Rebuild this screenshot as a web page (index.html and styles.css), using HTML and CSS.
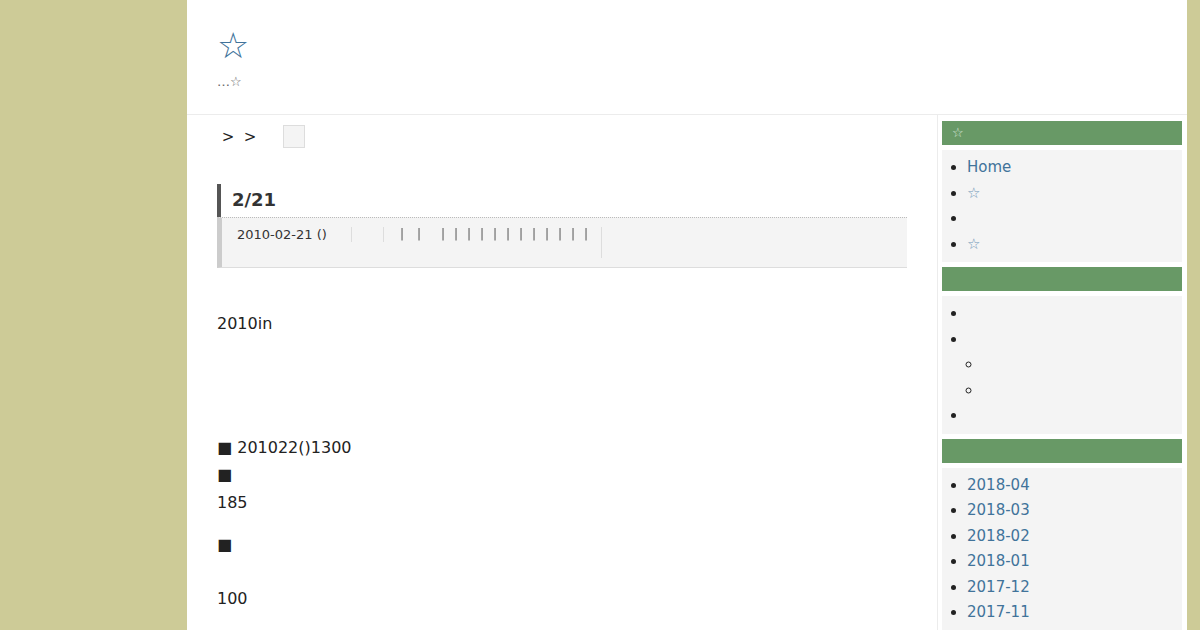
FILE: index.html
```html
<!DOCTYPE html>
<html lang="ja">
<head>
    <meta charset="UTF-8">
    <meta name="viewport" content="width=device-width, initial-scale=1.0">
    <title>2/21</title>
    <link rel="stylesheet" href="styles.css">
</head>
<body>
    <div class="wrapper">
        <!-- site header -->
        <div class="site-header">
            <div class="site-title"><a href="#">☆</a></div>
            <div class="site-desc">…☆</div>
        </div>

        <div class="columns">
            <!-- main column -->
            <div class="main">
                <div class="breadcrumb">
                    <span class="crumbs">&nbsp;&gt;&nbsp;&nbsp;&gt;&nbsp;</span>
                    <span class="crumb-box"></span>
                </div>

                <h2 class="entry-title">2/21</h2>
                <div class="entry-meta">
                    <span class="meta-date">2010-02-21 ()</span>
                    <span class="meta-sep"></span>
                    <span class="meta-sep meta-sep-b"></span>
                    <span class="meta-bars meta-bars-a"><span>|</span><span>|</span></span>
                    <span class="meta-bars meta-bars-b">
                        <span>|</span><span>|</span><span>|</span><span>|</span><span>|</span><span>|</span>
                        <span>|</span><span>|</span><span>|</span><span>|</span><span>|</span><span>|</span>
                    </span>
                    <span class="meta-end"></span>
                </div>

                <div class="entry-body">
                    <p class="para-1">2010in</p>
                    <p class="para-2">■ 201022()1300<br>■<br>185</p>
                    <p class="para-3">■</p>
                    <p class="para-4">100</p>
                </div>
            </div>

            <!-- sidebar -->
            <div class="sidebar">
                <div class="widget">
                    <div class="widget-title">☆</div>
                    <ul class="widget-body">
                        <li><a href="#">Home</a></li>
                        <li><a href="#" class="small-star">☆</a></li>
                        <li>&nbsp;</li>
                        <li><a href="#" class="small-star">☆</a></li>
                    </ul>
                </div>
                <div class="widget">
                    <div class="widget-title"></div>
                    <ul class="widget-body">
                        <li>&nbsp;</li>
                        <li>&nbsp;
                            <ul class="sub-list">
                                <li>&nbsp;</li>
                                <li>&nbsp;</li>
                            </ul>
                        </li>
                        <li>&nbsp;</li>
                    </ul>
                </div>
                <div class="widget">
                    <div class="widget-title"></div>
                    <ul class="widget-body">
                        <li><a href="#">2018-04</a></li>
                        <li><a href="#">2018-03</a></li>
                        <li><a href="#">2018-02</a></li>
                        <li><a href="#">2018-01</a></li>
                        <li><a href="#">2017-12</a></li>
                        <li><a href="#">2017-11</a></li>
                    </ul>
                </div>
            </div>
        </div>
    </div>
</body>
</html>
```

FILE: styles.css
```css
body {
    margin: 0;
    padding: 0;
    background-color: #cdcb97;
    color: #222;
    font-family: "DejaVu Sans", Verdana, sans-serif;
    font-size: 16px;
}
a {
    color: #41739a;
    text-decoration: none;
}
.wrapper {
    width: 1000px;
    margin: 0 13px 0 auto;
    background-color: #fff;
    min-height: 630px;
}
.site-header {
    height: 115px;
    padding: 24px 30px 0;
    border-bottom: 1px solid #ececec;
    box-sizing: border-box;
}
.site-title {
    font-size: 36px;
    line-height: 44px;
}
.site-title a {
    color: #41739a;
}
.site-desc {
    font-size: 13px;
    color: #666;
    line-height: 16px;
    margin-top: 6px;
}
.columns {
    display: flex;
}
.main {
    width: 750px;
    padding: 0 30px;
    box-sizing: border-box;
}
.breadcrumb {
    display: flex;
    align-items: center;
    height: 32px;
    margin-top: 5px;
    font-size: 15px;
    padding-top: 1px;
}
.crumb-box {
    display: inline-block;
    width: 20px;
    height: 21px;
    margin-left: 22px;
    margin-top: -2px;
    background-color: #f4f4f4;
    border: 1px solid #ddd;
}
.entry-title {
    margin: 31px 0 0;
    font-size: 18px;
    line-height: 25px;
    padding: 3px 0 5px 11px;
    border-left: 4px solid #555;
    color: #333;
}
.entry-meta {
    display: flex;
    align-items: flex-start;
    width: 690px;
    box-sizing: border-box;
    background-color: #f4f4f4;
    border-top: 1px dotted #bbb;
    border-bottom: 1px solid #ddd;
    border-left: 5px solid #ccc;
    padding: 9px 15px 9px;
    font-size: 13px;
    line-height: 16px;
    color: #333;
}
.meta-date {
    width: 114px;
    flex-shrink: 0;
}
.meta-sep {
    width: 31px;
    height: 15px;
    border-left: 1px solid #ddd;
    flex-shrink: 0;
}
.meta-sep-b {
    width: 16px;
}
.meta-bars {
    display: flex;
    flex-shrink: 0;
    color: #555;
    font-size: 12px;
    line-height: 15px;
    will-change: transform;
}
.meta-bars span {
    display: block;
    width: 3px;
    text-align: center;
}
.meta-bars-a {
    gap: 14px;
    width: 41px;
}
.meta-bars-b {
    gap: 10px;
    width: 160px;
}
.meta-end {
    height: 31px;
    border-left: 1px solid #ddd;
}
.entry-body p {
    margin: 0;
    line-height: 27.2px;
}
.entry-body .para-1 {
    margin-top: 42px;
}
.entry-body .para-2 {
    margin-top: 97px;
}
.entry-body .para-3 {
    margin-top: 15px;
}
.entry-body .para-4 {
    margin-top: 27px;
}
.sidebar {
    width: 250px;
    border-left: 1px solid #ececec;
    padding: 6px 5px 0 4px;
    box-sizing: border-box;
}
.widget {
    margin-bottom: 5px;
}
.widget-title {
    height: 24px;
    line-height: 24px;
    background-color: #689966;
    color: #dde8dc;
    font-size: 13px;
    padding-left: 10px;
}
.widget-body {
    margin: 5px 0 0;
    padding: 5px 0 5px 25px;
    background-color: #f4f4f4;
    font-size: 15px;
    line-height: 25.5px;
}
.small-star {
    color: #6f97b8;
}
.sub-list {
    margin: 0;
    padding-left: 15px;
    list-style-type: circle;
}
```
